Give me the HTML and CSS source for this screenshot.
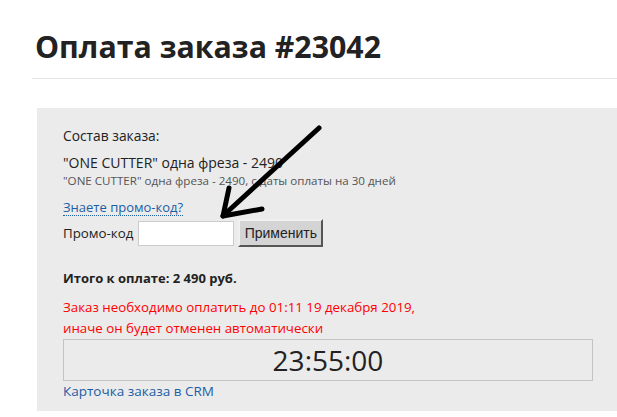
FILE: index.html
```html
<!DOCTYPE html>
<html lang="ru">
<head>
<meta charset="utf-8">
<link rel="stylesheet" href="styles.css">
</head>
<body>
<div class="page">
  <h1 class="title">Оплата заказа #23042</h1>
  <div class="panel">
    <div class="label">Состав заказа:</div>
    <div class="item">"ONE CUTTER" одна фреза - 2490</div>
    <div class="item-note">"ONE CUTTER" одна фреза - 2490, с даты оплаты на 30 дней</div>
    <a class="promo-link" href="#">Знаете промо-код?</a>
    <form class="promo-row">
      <label class="promo-label">Промо-код</label>
      <input class="promo-input" type="text">
      <button class="promo-btn" type="button">Применить</button>
    </form>
    <div class="total">Итого к оплате: 2 490 руб.</div>
    <div class="warn warn-first">Заказ необходимо оплатить до 01:11 19 декабря 2019,</div>
    <div class="warn">иначе он будет отменен автоматически</div>
    <div class="timer">23:55:00</div>
    <a class="crm-link" href="#">Карточка заказа в CRM</a>
  </div>
</div>
<svg class="arrow" width="617" height="417" viewBox="0 0 617 417">
  <g stroke="#000" stroke-width="5" stroke-linecap="round" fill="none">
    <line x1="319" y1="128" x2="225" y2="214"/>
    <line x1="223" y1="216" x2="229" y2="188"/>
    <line x1="223" y1="216" x2="262" y2="209"/>
  </g>
</svg>
</body>
</html>
```

FILE: styles.css
```css
html, body {
  margin: 0;
  padding: 0;
  background: #fff;
  overflow: hidden;
}
body {
  font-family: "Open Sans", "Liberation Sans", sans-serif;
  color: #222;
  position: relative;
  width: 617px;
  height: 417px;
}
.page {
  padding: 27px 0 0 32px;
}
.title {
  margin: 0;
  padding: 0 0 11px 3px;
  font-size: 30.3px;
  line-height: 40px;
  font-weight: 700;
  color: #222;
  border-bottom: 1px solid #e6e6e6;
}
.panel {
  margin: 29px 0 0 5px;
  background: #ebebeb;
  padding: 18px 24px 0 26px;
  height: 285px;
  box-sizing: content-box;
  display: flex;
  flex-direction: column;
  align-items: flex-start;
}
.label {
  font-size: 13.8px;
  line-height: 20px;
  margin-bottom: 7px;
}
.item {
  font-size: 14px;
  line-height: 20px;
}
.item-note {
  font-size: 11.6px;
  line-height: 16px;
  color: #555;
  margin-bottom: 10px;
}
.promo-link {
  display: block;
  font-size: 13px;
  line-height: 16px;
  color: #1b5ea6;
  text-decoration: none;
  border-bottom: 1px dotted #1b5ea6;
}
.promo-row {
  display: flex;
  align-items: center;
  margin: 3px 0 0;
}
.promo-label {
  font-size: 13.3px;
  margin-right: 5px;
}
.promo-input {
  width: 96px;
  height: 25px;
  box-sizing: border-box;
  border: 1px solid #ccc;
  background: #fff;
  margin: 0 4px 0 0;
  padding: 0;
}
.promo-btn {
  width: 85px;
  height: 28px;
  box-sizing: border-box;
  font-family: "Liberation Sans", sans-serif;
  font-size: 14px;
  color: #222;
  background: #d4d4d4;
  border: 2px solid;
  border-color: #f0f0f0 #555 #555 #f0f0f0;
  padding: 0;
}
.total {
  font-size: 13px;
  font-weight: 700;
  line-height: 20px;
  margin-top: 21px;
}
.warn {
  font-size: 13.3px;
  line-height: 21px;
  color: #f00;
}
.warn-first {
  margin-top: 9px;
}
.timer {
  align-self: stretch;
  height: 42px;
  box-sizing: border-box;
  border: 1px solid #c3c3c3;
  display: flex;
  align-items: center;
  justify-content: center;
  font-size: 28px;
  color: #222;
}
.crm-link {
  display: block;
  font-size: 13.5px;
  line-height: 20px;
  color: #1b5ea6;
  text-decoration: none;
}
.arrow {
  position: absolute;
  left: 0;
  top: 0;
  pointer-events: none;
}
```
